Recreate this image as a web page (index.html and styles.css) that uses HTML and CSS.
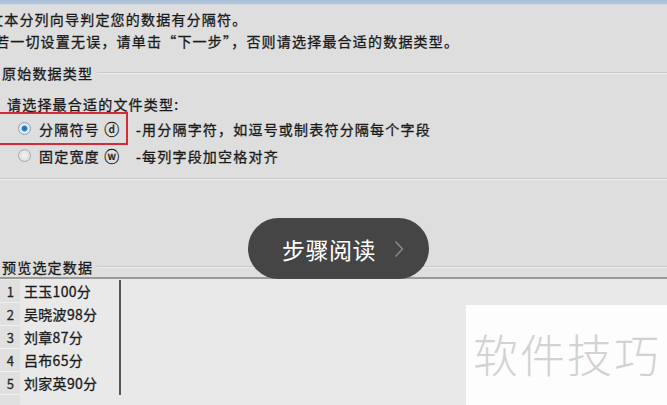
FILE: index.html
```html
<html>
  <head>
    <title>文本分列向导</title>
    <link rel="stylesheet" href="styles.css">
  </head>
  <body>
    <div class="titlebar"></div>
    <div class="intro">
      <div class="line first">文本分列向导判定您的数据有分隔符。</div>
      <div class="line second">若一切设置无误，请单击“下一步”，否则请选择最合适的数据类型。</div>
    </div>

    <section class="group">
      <div class="group-title"><span>原始数据类型</span></div>
      <div class="prompt">请选择最合适的文件类型:</div>
      <div class="option picked">
        <span class="radio checked"></span>
        <span class="label">分隔符号 <u>ⓓ</u></span>
        <span class="desc">-用分隔字符，如逗号或制表符分隔每个字段</span>
      </div>
      <div class="option">
        <span class="radio"></span>
        <span class="label">固定宽度 <u>ⓦ</u></span>
        <span class="desc">-每列字段加空格对齐</span>
      </div>
    </section>

    <div class="spacer"></div>

    <div class="group-title preview-title"><span>预览选定数据</span></div>
    <div class="preview">
      <div class="row"><span class="num">1</span><span class="cell">王玉100分</span></div>
      <div class="row"><span class="num">2</span><span class="cell">吴晓波98分</span></div>
      <div class="row"><span class="num">3</span><span class="cell">刘章87分</span></div>
      <div class="row"><span class="num">4</span><span class="cell">吕布65分</span></div>
      <div class="row"><span class="num">5</span><span class="cell">刘家英90分</span></div>
      <div class="row"><span class="num"></span><span class="cell"></span></div>
    </div>

    <!-- overlays on top of the screenshot -->
    <a class="step-btn">步骤阅读<svg class="chev" width="10" height="18" viewBox="0 0 10 18"><polyline points="1.5,1.5 8.5,9 1.5,16.5" fill="none" stroke="#8c8c8c" stroke-width="1.4"/></svg></a>
    <div class="watermark">软件技巧</div>
  </body>
</html>
```

FILE: styles.css
```css
:root {
  --bg: #dedede;
  --ink: #1a1a1a;
  --line: #c9c9c9;
}

body {
  margin: 0;
  width: 667px;
  height: 405px;
  overflow: hidden;
  position: relative;
  background-color: var(--bg);
  color: var(--ink);
  font-family: "Noto Sans CJK SC", "Noto Sans", sans-serif;
  font-size: 14px;
  letter-spacing: 1.2px;
  -webkit-text-stroke: 0.3px #1a1a1a;
}

.titlebar {
  height: 4px;
  background: linear-gradient(#a7bfd8, #b7c9dc);
  border-bottom: 1px solid #cfd6de;
}

.intro {
  padding-top: 3px;
}
.intro .line {
  height: 22px;
  line-height: 22px;
  white-space: nowrap;
}
.intro .first {
  margin-left: -11px;
}
.intro .second {
  margin-left: -5px;
}

.group {
  padding-top: 10px;
}
.group-title {
  display: flex;
  align-items: center;
  height: 22px;
  padding-left: 2px;
}
.group-title::after {
  content: "";
  flex: 1;
  height: 1px;
  margin-left: 4px;
  background-color: var(--line);
  border-bottom: 1px solid #ececec;
}

.prompt {
  height: 22px;
  line-height: 22px;
  margin-top: 9px;
  padding-left: 7px;
}

.option {
  display: flex;
  align-items: center;
  height: 21px;
  white-space: nowrap;
}
.option.picked {
  height: 29px;
  margin-top: -3px;
  margin-left: -2px;
  width: 128px;
  border: 2px solid #d42a3a;
  border-left: none;
}
.option .radio {
  width: 11px;
  height: 11px;
  border-radius: 50%;
  border: 1px solid #a9a9a9;
  background: radial-gradient(#f4f4f4, #d6d6d6);
  margin: 0 8px 0 18px;
  flex: none;
}
.option.picked .radio {
  margin-left: 20px;
}
.option .radio.checked {
  background: radial-gradient(circle, #1f6fb0 0, #2a86c8 2.5px, #e8eef4 3.5px, #d2d8de 100%);
  border-color: #8aa2b8;
}
.option .label {
  width: 97px;
  flex: none;
}
.option .label u {
  text-decoration: none;
  font-size: 15px;
  letter-spacing: 0;
}

.spacer {
  height: 78px;
  margin-top: 12px;
  border-top: 1px solid var(--line);
  box-shadow: inset 0 1px 0 #ececec;
}

.preview-title {
  height: 20px;
}

.preview {
  border-top: 2px solid #9a9a9a;
  background-color: #e9e9e9;
  padding-top: 1px;
}
.preview .row {
  display: flex;
  height: 23px;
  line-height: 23px;
}
.preview .num {
  width: 20px;
  padding-left: 2px;
  text-align: center;
  background-color: #e0e0e0;
  border-bottom: 1px solid #f0f0f0;
  box-sizing: border-box;
  font-size: 13px;
  color: #333;
}
.preview .cell {
  width: 95px;
  padding-left: 4px;
  border-right: 2px solid #555;
  white-space: nowrap;
  letter-spacing: 0.3px;
}
.preview .row:last-child .cell {
  border-right-color: transparent;
}

.step-btn {
  position: absolute;
  left: 248px;
  top: 218px;
  width: 181px;
  height: 61px;
  border-radius: 31px;
  background-color: #454545;
  color: #fff;
  -webkit-text-stroke: 0;
  font-size: 23px;
  letter-spacing: 0.5px;
  display: flex;
  align-items: center;
  padding-left: 34px;
  box-sizing: border-box;
}
.step-btn .chev {
  margin-left: 18px;
}

.watermark {
  position: absolute;
  left: 466px;
  top: 305px;
  right: 0;
  bottom: 0;
  background-color: #fdfdfd;
  color: #d2d2d2;
  -webkit-text-stroke: 0;
  font-size: 45px;
  letter-spacing: 2px;
  padding: 16px 0 0 7px;
  white-space: nowrap;
  font-weight: 300;
}
```
